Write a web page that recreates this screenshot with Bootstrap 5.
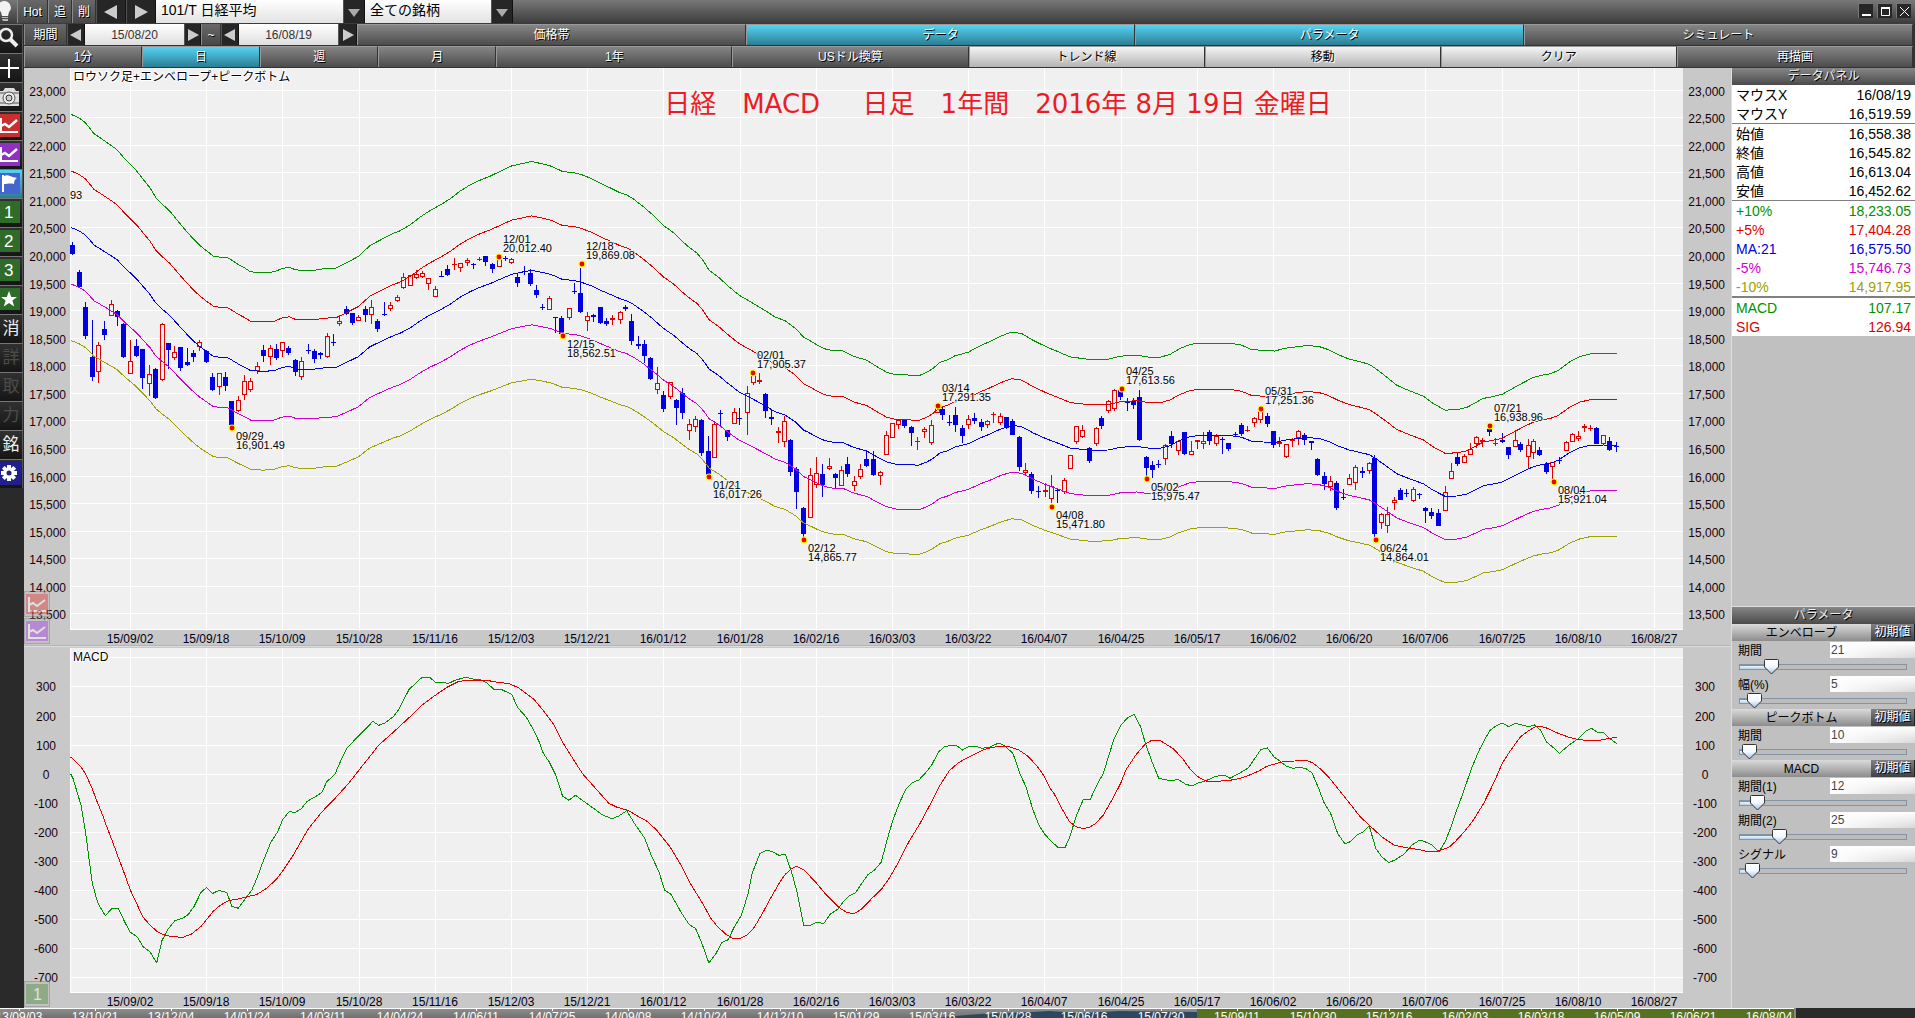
<!DOCTYPE html>
<html lang="ja">
<head>
<meta charset="utf-8">
<meta name="viewport" content="width=device-width, initial-scale=1">
<title>101/T 日経平均</title>
<link rel="stylesheet" href="https://cdn.jsdelivr.net/npm/bootstrap@5.3.0/dist/css/bootstrap.min.css">
<style>
body{font-family:"Liberation Sans","Noto Sans CJK JP",sans-serif;font-size:12px;line-height:16px;background:#2a2a2a;color:#000}
button,input,select{font-family:inherit;border-radius:0}
button{border:0;padding:0}
.title-bar{height:24px;background:linear-gradient(#787878,#3a3a3a)}
.tool-key{height:23px;color:#fff;background:linear-gradient(#686868,#484848);border-left:1px solid #8a8a8a;border-right:1px solid #333;text-shadow:1px 1px 0 #000;font-size:12px}
.arrow-key{background:#262626;border-left:1px solid #555;border-right:1px solid #111}
.combo{appearance:none;border:0;height:23px;font-size:14px;line-height:20px;padding:0 0 3px 5px;background:linear-gradient(#fff,#e2e2e2);color:#000}
.win-key{width:15px;height:15px;background:#262626;border-left:1px solid #777;border-top:1px solid #777;display:flex;align-items:center;justify-content:center}
.bar-row{height:22px;background:#333;padding:0 2px 1px 0}
.period-box{width:99px;height:21px;border:0;text-align:center;color:#333;background:linear-gradient(#fff,#dedede);font-size:12px}
.tab-key{flex:1 1 2px;min-width:0;height:21px;color:#fff;background:linear-gradient(#858585,#4c4c4c);border-left:1px solid #999;border-top:1px solid #9a9a9a;border-right:1px solid #333;text-shadow:1px 1px 0 #000;font-size:12px;line-height:18px}
.tab-key.wide{flex:2 1 4px}
.tab-key.on{background:linear-gradient(#55d4f4,#2b7d92)}
.tab-key.light{background:linear-gradient(#f4f4f4,#b4b4b4);color:#000;text-shadow:1px 1px 0 #fff}
.side{width:24px;background:#2a2a2a}
.side button{width:23px;height:29px;display:block;border-top:1px solid #757575;border-right:1px solid #555;background:linear-gradient(#303030,#151515);color:#eee;font-size:17px;line-height:26px;overflow:hidden}
.side button.on{background:linear-gradient(#55d4f4,#2b7d92)}
.side button.off{color:#4c4c4c}
.side svg{display:block}
.chart-col{background:#c8c8c8;flex:1 1 0;min-width:0}
.price-pane{flex:579 1 0;min-height:0}
.macd-pane{flex:361 1 0;min-height:0}
.chart-col svg.plot{position:absolute;inset:0;width:100%;height:100%;display:block}
.plot text{font-size:12px;fill:#1c0008}
.plot .date{fill:#000018}
.plot .peak{font-size:11px;fill:#000;stroke:#f4f4f4;stroke-width:2px;paint-order:stroke}
.plot .caption{fill:#000;stroke:#fff;stroke-width:2px;paint-order:stroke}
.chart-head{position:absolute;left:37.5%;top:20px;color:#ed1c24;font:400 26px/32px "DejaVu Sans","Noto Sans CJK JP",sans-serif;white-space:pre}
.chart-head span{font-family:"Noto Sans CJK JP",sans-serif;font-weight:300}
.ghost-keys{position:absolute;left:0;bottom:3px;opacity:.45}
.macd-pane .ghost-keys{bottom:1px}
.ghost-keys button{width:26px;height:26px;display:block;background:#bbb;border:1px solid #777;margin-bottom:1px;padding:2px 1px}
.ghost-keys button:last-child{margin-bottom:0}
.right-col{width:184px;background:#c0c0c0;border-left:1px solid #ddd}
.data-pane{flex:539 1 0}
.param-pane{flex:401 1 0;border-top:1px solid #ddd}
.pane-head{height:17px;background:linear-gradient(#868686,#4a4a4a);color:#eee;text-align:center;font-size:12px;line-height:16px;text-shadow:1px 1px 0 #000;margin:0;font-weight:400}
.values{width:100%;border-collapse:separate;border-spacing:0;background:#fff;font-size:14px;line-height:18px}
.values th{font-weight:400;padding:1px 0 0 4px}
.values td{text-align:right;padding:1px 4px 0 0}
.values .line1>*{border-top:1px solid #808080}
.values .line2>*{border-top:2px solid #808080}
.c-green{color:#009000}.c-red{color:#e00000}.c-blue{color:#0000e0}.c-mag{color:#d000d0}.c-olive{color:#a0a000}
.group-head{height:17px;background:linear-gradient(#dadada,#8c8c8c);margin:0;font-size:12px;line-height:18px;text-align:center;font-weight:400}
.reset-key{width:44px;height:17px;flex:none;background:linear-gradient(#808080,#404040);color:#fff;font-size:12px;line-height:17px;text-shadow:1px 1px 0 #000;border-right:1px solid #222}
.param{padding-left:6px}
.param label{height:17px;line-height:20px;font-size:12px;flex:1}
.param input[type=text]{width:85px;height:16px;margin-top:1px;border:0;padding:0 1px;font-size:12px;color:#444;background:linear-gradient(90deg,#fff,#fff0),linear-gradient(#fff,#d8d8d8)}
.param input[type=range]{appearance:none;-webkit-appearance:none;display:block;width:168px;height:17px;margin:0 0 0 1px;background:none}
.param input[type=range]::-webkit-slider-runnable-track{height:6px;border:1px solid #8494a4;background:linear-gradient(90deg,#6a90c8 0,#6a90c8 0) 0 0/var(--fill) 1px no-repeat,linear-gradient(#fff,#b4d4f0) 0 0/var(--fill) 100% no-repeat,#bcbcbc}
.param input[type=range]::-webkit-slider-thumb{-webkit-appearance:none;width:15px;height:16px;margin-top:-6px;border:0;background:url("data:image/svg+xml,%3Csvg xmlns='http://www.w3.org/2000/svg' width='15' height='16'%3E%3ClinearGradient id='g' x2='0' y2='1'%3E%3Cstop stop-color='%23fff'/%3E%3Cstop offset='.5' stop-color='%23f4f8ff'/%3E%3Cstop offset='1' stop-color='%2398c0e8'/%3E%3C/linearGradient%3E%3Cpath d='M1.5.5h12q1 0 1 1v6.500l-7 7-7-7V1.500q0-1 1-1z' fill='url(%23g)' stroke='%23333'/%3E%3C/svg%3E") no-repeat}
.time-strip{height:10px}
.time-strip svg{display:block;width:100%;height:10px}
.time-strip text{font-size:12px;fill:#fff}
</style>
<script src="https://cdn.jsdelivr.net/npm/bootstrap@5.3.0/dist/js/bootstrap.bundle.min.js"></script>
</head>
<body class="d-flex flex-column vh-100 overflow-hidden">

<header class="title-bar d-flex align-items-start flex-shrink-0">
  <svg width="17" height="22" class="flex-shrink-0" aria-hidden="true"><path d="M-1 3Q5-1 9 3q4 5 0 9l-1 4H2l-1-4-3-3z" fill="#f2f2f2"/><path d="M2 17h6v1H2zM2 19h6v2H3z" fill="#bbb"/></svg>
  <button class="tool-key" style="width:31px">Hot</button>
  <button class="tool-key" style="width:24px">追</button>
  <button class="tool-key" style="width:24px">削</button>
  <button class="tool-key arrow-key" style="width:30px" aria-label="前"><svg width="16" height="16"><path d="M14 1v14L1 8z" fill="#ccc"/></svg></button>
  <button class="tool-key arrow-key" style="width:30px" aria-label="次"><svg width="16" height="16"><path d="M2 1v14l13-7z" fill="#ccc"/></svg></button>
  <select class="combo" style="width:187px" aria-label="銘柄"><option>101/T 日経平均</option></select>
  <span class="tool-key arrow-key text-center pt-1" style="width:22px"><svg width="12" height="9"><path d="M0 1h12L6 9z" fill="#aaa"/></svg></span>
  <select class="combo" style="width:126px" aria-label="銘柄リスト"><option>全ての銘柄</option></select>
  <span class="tool-key arrow-key text-center pt-1" style="width:22px"><svg width="12" height="9"><path d="M0 1h12L6 9z" fill="#aaa"/></svg></span>
  <div class="ms-auto d-flex gap-1 pe-1" style="padding-top:3px">
    <button class="win-key" aria-label="最小化"><svg width="11" height="11"><path d="M1 8h9v2H1z" fill="#fff"/></svg></button>
    <button class="win-key" aria-label="最大化"><svg width="11" height="11"><path d="M1.500 1.500h8v8h-8z" fill="none" stroke="#fff"/><path d="M1 1h9v2H1z" fill="#fff"/></svg></button>
    <button class="win-key" aria-label="閉じる"><svg width="11" height="11"><path d="M1 1l9 9M10 1l-9 9" stroke="#fff" stroke-width="1"/></svg></button>
  </div>
</header>

<div class="d-flex flex-fill" style="min-height:0">
  <nav class="side flex-shrink-0" aria-label="ツール">
    <button aria-label="拡大"><svg width="23" height="28"><circle cx="6" cy="10" r="6" fill="none" stroke="#eee" stroke-width="2.500"/><path d="M10 14l7 7" stroke="#eee" stroke-width="4"/></svg></button>
    <button aria-label="十字"><svg width="23" height="28"><path d="M0 14h19M9 5v19" stroke="#fff" stroke-width="2"/></svg></button>
    <button aria-label="撮影"><svg width="23" height="28"><path d="M-1 8h4l2-3h9l2 3h3v15H-1z" fill="#ddd"/><path d="M0 10h19M0 20h19" stroke="#555"/><circle cx="9" cy="15" r="6" fill="#eee" stroke="#555"/><circle cx="9" cy="15" r="3" fill="#ccc" stroke="#333"/></svg></button>
    <button aria-label="赤チャート"><svg width="23" height="28"><path d="M0 2h20v23H0z" fill="#c83030"/><path d="M1 6v14h17" stroke="#fff" stroke-width="2" fill="none"/><path d="M1 14l4-2 4 3 8-7" stroke="#fff" stroke-width="2.500" fill="none"/></svg></button>
    <button aria-label="紫チャート"><svg width="23" height="28"><path d="M0 2h20v23H0z" fill="#8e30c0"/><path d="M1 6v14h17" stroke="#fff" stroke-width="2" fill="none"/><path d="M1 14l4-2 4 3 8-7" stroke="#fff" stroke-width="2.500" fill="none"/></svg></button>
    <button class="on" aria-label="旗"><svg width="23" height="28"><path d="M0 3h20v21H0z" fill="#4664d0"/><path d="M3 5v17" stroke="#fff" stroke-width="2"/><path d="M4 6c4-2 6 1 13 2-2 1-3 3-3 6-5-1-6 0-10 0z" fill="#fff"/></svg></button>
    <button><svg width="23" height="28"><path d="M0 2h20v22H0z" fill="#2f6c2a"/><text x="4" y="19" font-size="17" fill="#fff">1</text></svg></button>
    <button><svg width="23" height="28"><path d="M0 2h20v22H0z" fill="#2f6c2a"/><text x="4" y="19" font-size="17" fill="#fff">2</text></svg></button>
    <button><svg width="23" height="28"><path d="M0 2h20v22H0z" fill="#2f6c2a"/><text x="4" y="19" font-size="17" fill="#fff">3</text></svg></button>
    <button aria-label="お気に入り"><svg width="23" height="28"><path d="M0 2h20v22H0z" fill="#2f6c2a"/><path d="M9 5l2.200 6H17l-4.600 3.600 1.800 6L9 17l-5.200 3.600 1.800-6L1 11h5.800z" fill="#fff"/></svg></button>
    <button>消</button>
    <button class="off">詳</button>
    <button class="off">取</button>
    <button class="off">力</button>
    <button>銘</button>
    <button aria-label="設定"><svg width="23" height="28"><path d="M0 1h21v24H0z" fill="#20208c"/><g stroke="#fff" stroke-width="4"><path d="M9 5v16M1 13h16M3.300 7.300l11.400 11.400M14.700 7.300L3.300 18.700"/></g><circle cx="9" cy="13" r="5.500" fill="#fff"/><circle cx="9" cy="13" r="2.500" fill="#20208c"/></svg></button>
  </nav>

  <div class="d-flex flex-column flex-fill" style="min-width:0">
    <div class="bar-row d-flex">
      <label class="tool-key text-center" for="from" style="width:43px;height:21px;line-height:22px">期間</label>
      <button class="tool-key arrow-key h-100" style="width:18px" aria-label="開始を前へ"><svg width="12" height="12"><path d="M11 0v12L0 6z" fill="#ccc"/></svg></button>
      <input class="period-box" id="from" value="15/08/20">
      <button class="tool-key arrow-key h-100" style="width:17px" aria-label="開始を次へ"><svg width="12" height="12"><path d="M1 0v12l11-6z" fill="#ccc"/></svg></button>
      <span class="tool-key text-center h-100" style="width:20px;line-height:22px">~</span>
      <button class="tool-key arrow-key h-100" style="width:18px" aria-label="終了を前へ"><svg width="12" height="12"><path d="M11 0v12L0 6z" fill="#ccc"/></svg></button>
      <input class="period-box" value="16/08/19" aria-label="終了日">
      <button class="tool-key arrow-key h-100" style="width:19px" aria-label="終了を次へ"><svg width="12" height="12"><path d="M1 0v12l11-6z" fill="#ccc"/></svg></button>
      <button class="tab-key">価格帯</button>
      <button class="tab-key on">データ</button>
      <button class="tab-key on">パラメータ</button>
      <button class="tab-key">シミュレート</button>
    </div>
    <div class="bar-row d-flex">
      <button class="tab-key">1分</button>
      <button class="tab-key on">日</button>
      <button class="tab-key">週</button>
      <button class="tab-key">月</button>
      <button class="tab-key wide">1年</button>
      <button class="tab-key wide">USドル換算</button>
      <button class="tab-key wide light">トレンド線</button>
      <button class="tab-key wide light">移動</button>
      <button class="tab-key wide light">クリア</button>
      <button class="tab-key wide">再描画</button>
    </div>

    <div class="d-flex flex-fill" style="min-height:0">
      <main class="chart-col d-flex flex-column">
        <section class="price-pane position-relative">
          <svg class="plot" id="price"></svg>
          <div class="chart-head">日経　MACD　  日足　1年間　2016年 8月 19日 金曜日</div>
          <div class="ghost-keys">
            <button aria-label="赤チャート"><svg width="22" height="20"><path d="M0 0h22v20H0z" fill="#e03838"/><path d="M3 3v14h17M3 11l4-2 4 3 8-6" stroke="#fff" stroke-width="2" fill="none"/></svg></button>
            <button aria-label="紫チャート"><svg width="22" height="20"><path d="M0 0h22v20H0z" fill="#a040e0"/><path d="M3 3v14h17M3 11l4-2 4 3 8-6" stroke="#fff" stroke-width="2" fill="none"/></svg></button>
          </div>
        </section>
        <section class="macd-pane position-relative">
          <svg class="plot" id="macd"></svg>
          <div class="ghost-keys"><button><svg width="22" height="20"><path d="M0 0h22v20H0z" fill="#48883c"/><text x="7" y="16" font-size="16" fill="#fff">1</text></svg></button></div>
        </section>
      </main>

      <aside class="right-col d-flex flex-column flex-shrink-0">
        <section class="data-pane">
          <h2 class="pane-head">データパネル</h2>
          <table class="values">
            <tbody>
              <tr><th>マウスX</th><td>16/08/19</td></tr>
              <tr><th>マウスY</th><td>16,519.59</td></tr>
              <tr class="line1"><th>始値</th><td>16,558.38</td></tr>
              <tr><th>終値</th><td>16,545.82</td></tr>
              <tr><th>高値</th><td>16,613.04</td></tr>
              <tr><th>安値</th><td>16,452.62</td></tr>
              <tr class="line1"><th class="c-green">+10%</th><td class="c-green">18,233.05</td></tr>
              <tr class="c-red"><th>+5%</th><td>17,404.28</td></tr>
              <tr class="c-blue"><th>MA:21</th><td>16,575.50</td></tr>
              <tr class="c-mag"><th>-5%</th><td>15,746.73</td></tr>
              <tr class="c-olive"><th>-10%</th><td>14,917.95</td></tr>
              <tr class="line2"><th class="c-green">MACD</th><td class="c-green">107.17</td></tr>
              <tr class="c-red"><th>SIG</th><td>126.94</td></tr>
            </tbody>
          </table>
        </section>
        <section class="param-pane">
          <h2 class="pane-head">パラメータ</h2>
          <div class="d-flex"><h3 class="group-head flex-fill">エンベローブ</h3><button class="reset-key">初期値</button></div>
          <div class="param"><div class="d-flex"><label for="p1">期間</label><input type="text" id="p1" value="21"></div><input type="range" min="2" max="124" value="21" aria-label="エンベローブ 期間"></div>
          <div class="param"><div class="d-flex"><label for="p2">幅(%)</label><input type="text" id="p2" value="5"></div><input type="range" min="0.5" max="100" step="0.5" value="5" aria-label="エンベローブ 幅"></div>
          <div class="d-flex"><h3 class="group-head flex-fill">ピークボトム</h3><button class="reset-key">初期値</button></div>
          <div class="param"><div class="d-flex"><label for="p3">期間</label><input type="text" id="p3" value="10"></div><input type="range" min="8" max="170" value="10" aria-label="ピークボトム 期間"></div>
          <div class="d-flex"><h3 class="group-head flex-fill">MACD</h3><button class="reset-key">初期値</button></div>
          <div class="param"><div class="d-flex"><label for="p4">期間(1)</label><input type="text" id="p4" value="12"></div><input type="range" min="2" max="158" value="12" aria-label="MACD 期間1"></div>
          <div class="param"><div class="d-flex"><label for="p5">期間(2)</label><input type="text" id="p5" value="25"></div><input type="range" min="2" max="109" value="25" aria-label="MACD 期間2"></div>
          <div class="param"><div class="d-flex"><label for="p6">シグナル</label><input type="text" id="p6" value="9"></div><input type="range" min="4" max="160" value="9" aria-label="MACD シグナル"></div>
        </section>
      </aside>
    </div>
  </div>
</div>

<footer class="time-strip flex-shrink-0"><svg id="strip"></svg></footer>

<script>
/* Series are kept in blocks: x origin, y origin, x scale, y scale, then the points. */
const MA = [
[0,60,3,3,"212,502 222,506 238,513 256,525 270,541 283,556 300,566 314,575 333,587 350,598 371,620 391,639 410,657 430,680 450,703 467,729 490,750 510,767 535,795 560,822 583,845 600,860 619,874 640,889 660,892 680,892 695,900 715,912 735,922 752,932 790,934 822,932 845,923 868,919 885,926 905,928 940,928 975,923 1008,922 1040,907 1075,890 1110,860 1150,841 1180,827"],
[400,200,3,3,"0,400 30,384 60,363 90,345 120,330 150,313 180,292 210,275 240,262 270,251 300,238 335,223 365,217 395,211 425,217 455,224 487,238 525,242 545,247 575,258 600,270 635,285 660,296 680,302 700,313 730,334 760,358 790,385 820,405 850,431 870,447 890,460 910,482 928,508 955,526 985,551 1018,576 1060,598 1100,620 1125,635 1155,645 1185,665"],
[800,340,3,3,"12,271 25,277 49,290 75,302 100,307 128,307 160,322 200,333 230,350 260,366 290,373 320,373 355,376 380,366 395,358 420,339 440,333 465,321 505,311 540,294 570,282 600,268 635,256 665,260 700,279 740,297 770,308 810,324 870,331 925,330 960,322 1010,319 1050,325 1080,325 1110,317 1140,301 1170,290 1200,286"],
[1200,330,3,3,"10,316 40,316 70,316 100,318 125,322 155,334 190,336 225,338 250,331 275,328 320,323 355,325 385,334 415,348 448,360 475,366 508,374 530,388 560,409 590,431 625,445 670,461 700,481 735,499 770,498 800,492 830,477 850,467 875,463 907,456 940,439 970,424 1000,410 1030,403 1050,400 1075,391 1110,367 1140,353 1170,346 1210,345 1250,346"]];
const V = 2.9145, W1 = 2.24, W2 = 2.306;
const MACD = [
[0,480,3,V,"212,857 220,872 232,912 243,947 257,1030 268,1110 277,1175 293,1232 316,1270 336,1248 355,1248 375,1290 391,1318 412,1332 430,1361 450,1375 470,1407 486,1342 505,1308 525,1284 548,1277 565,1266 582,1243 603,1202 619,1188 638,1205 657,1196 680,1202 696,1243 715,1248 735,1222 755,1196 772,1158 790,1110 812,1057 833,1025 848,990 868,966 885,969 903,959 922,936 945,924 965,911 980,880 1005,857 1025,812 1042,780 1075,747 1105,718 1118,703 1136,715 1155,708 1180,690 1195,671"],
[400,640,W1,3,"0,200 10,175 20,149 40,123 50,112 66,112 80,127 98,127 107,131 125,120 148,112 165,118 180,119 195,129 210,148 228,149 250,163 264,204 282,230 296,262 312,306 321,340 334,365 349,405 364,468 378,481 393,466 420,492 455,526 475,536 490,528 508,512 526,552 548,594 564,650 580,695 593,751 607,763 630,818 648,854 662,865 675,905 692,969 708,940 721,908 735,899 748,863 765,825 780,760 789,700 806,641 822,630 834,635 849,646 863,643 877,695 889,755 904,856 920,856 934,846 949,851 964,822 981,807 992,787 1007,767 1020,758 1048,704 1063,690 1078,666 1090,605 1104,540 1120,485 1133,448 1147,428 1162,420 1175,402 1191,375 1206,337 1218,321 1235,316 1246,316 1260,330 1272,321 1288,318 1303,325 1320,322 1341,309 1355,318 1373,340 1390,405 1402,440 1418,510 1432,558 1444,582"],
[1050,640,W2,3,"0,600 18,622 35,622 46,590 60,530 77,478 93,478 106,440 123,400 136,345 148,295 163,256 180,232 194,223 209,260 220,310 235,365 251,415 265,419 282,422 295,418 312,432 327,438 340,430 360,422 382,409 402,405 415,415 435,401 457,384 473,354 486,329 501,324 516,350 530,363 545,379 560,385 575,382 590,386 604,398 618,440 632,488 647,520 664,582 680,611 691,606 708,585 722,576 736,557 751,625 765,650 781,668 795,660 815,644 835,615 853,600 868,607 880,614 897,635 912,603 925,560 938,510 955,450 972,385 990,330 1005,292 1015,271 1026,260 1043,249 1058,260 1074,250 1090,256 1105,260 1117,255 1131,270 1145,306 1160,322 1175,340 1195,317 1217,297 1235,274 1249,265 1262,277 1277,278 1290,295 1307,311"]];
const SIG = [
[0,480,3,V,"212,808 225,818 243,837 257,857 277,900 290,935 305,970 320,1010 340,1060 355,1100 370,1138 391,1195 410,1235 428,1273 450,1297 470,1315 485,1323 510,1330 548,1333 575,1323 603,1301 619,1282 640,1257 660,1240 685,1226 710,1222 740,1215 770,1208 800,1190 830,1163 850,1137 880,1093 905,1050 925,1017 965,968 1005,928 1045,885 1075,848 1115,799 1136,773 1180,735"],
[400,640,W1,3,"0,258 25,227 50,195 80,165 105,142 130,125 150,121 195,121 210,125 245,131 265,143 300,178 320,210 345,255 365,308 390,362 410,403 440,448 468,490 485,501 510,511 535,530 555,545 575,571 605,621 630,677 650,730 680,795 695,833 710,858 730,883 745,895 762,895 777,885 793,863 810,825 830,775 850,728 863,703 877,686 889,679 905,690 930,725 955,765 985,804 1000,817 1017,821 1033,808 1055,778 1080,745 1095,717 1115,670 1140,605 1165,550 1190,487 1210,435 1230,393 1250,369 1275,350 1310,328 1335,320 1362,319 1385,329 1405,347 1425,375 1443,408"],
[1050,640,W2,3,"0,445 10,462 25,500 45,545 60,560 77,566 92,561 105,551 123,525 145,475 163,430 175,390 198,345 220,311 232,303 253,301 268,313 285,327 305,355 325,390 342,411 362,424 385,424 415,421 435,416 455,408 480,394 500,379 516,373 540,364 565,363 590,361 605,368 625,388 645,415 665,448 690,488 715,530 740,560 765,590 793,615 820,623 853,629 870,635 895,633 920,622 935,604 955,576 975,543 1000,490 1025,424 1043,370 1060,335 1085,290 1105,271 1120,260 1135,260 1150,266 1170,279 1195,291 1215,298 1235,301 1268,301 1285,296 1307,292"]];
/* Candles: colour and x, high, body top, body bottom, low. */
const CANDLES = [
[0,60,"b218 547 555 582 585,b238 630 636 682 684,b257 726 741 828 836,b277 780 891 950 963,r296 846 856 937 969,b314 783 807 825 839,r334 720 733 769 769,b352 750 753 770 798,b371 788 792 891 894,r392 840 904 943 943,b409 837 858 888 891,b427 867 867 953 987,r449 915 943 973 1008,b466 924 927 1013 1017,r486 790 793 961 963,b505 849 849 869 927,r524 858 877 895 899,b541 861 861 923 932,b562 864 906 915 919,b580 870 879 891 906,r599 840 847 860 872,b619 870 873 905 908,b638 939 951 990 993,r657 940 940 982 1004,b676 936 951 978 992,b694 1023 1023 1095 1100,r715 1008 1021 1053 1056,r734 945 964 1006 1021,r752 955 964 991 995,r773 906 919 933 941,b790 855 870 888 905,r810 855 865 892 914,b829 853 867 893 899,r848 847 847 874 890,b866 859 864 879 885,b886 897 900 935 947,r905 892 904 952 960,b924 852 870 873 881,b943 868 873 896 908,b961 876 879 884 896,r981 820 829 892 893,b1001 822 846 849 858,r1019 766 784 793 797,b1038 739 747 761 766,b1057 760 760 789 795,r1076 765 770 784 784,b1096 739 747 765 786,r1115 720 742 766 792,b1132 778 783 806 815,b1153 726 762 765 768,r1172 727 736 748 754,r1191 706 710 722 727,r1211 640 650 685 688,r1230 644 644 679 679,r1249 630 641 655 658"],
[400,200,"r68 214 220 230 235,r86 235 235 253 269,r105 259 267 292 292,b125 213 228 231 231,b142 195 207 224 227,r163 174 192 195 209,r181 188 190 203 215,r201 175 181 190 197,b220 190 192 195 207,r239 170 178 181 182,b257 168 168 185 197,b277 189 192 208 218,r297 170 172 202 202,b316 168 174 176 182,r335 175 178 188 191,b352 222 231 248 261,b373 199 213 216 224,b391 208 219 251 257,b409 255 270 285 293,b428 312 320 324 330,r449 287 295 331 331,b467 350 351 354 399,b484 348 354 402 405,r507 325 325 355 359,b523 249 273 276 282,b541 204 279 335 338,r563 337 349 362 392,b580 342 346 351 365,b600 321 321 368 371,b619 354 363 372 377,r638 346 355 361 374,r660 334 337 361 371,b676 315 321 326 332,b694 343 363 422 434,b714 408 432 437 446,b733 421 432 467 488,b752 470 474 536 540,r773 501 549 571 581,b790 573 585 626 635,r810 545 547 592 596,b829 597 600 623 674,b848 564 579 638 656,r867 657 672 694 719,r887 648 658 682 696,b904 657 660 758 767,b925 708 753 824 826,r944 664 673 775 775,b962 630 639 643 677,b981 690 690 710 722,r1002 625 637 673 673,b1018 624 654 657 674,r1041 558 580 640 704,r1059 520 522 550 554,r1077 519 541 547 552,b1096 579 582 632 653,b1115 627 651 656 674,r1134 681 693 700 728,r1154 648 664 727 740,b1171 717 720 815 827,b1189 802 807 875 926,b1210 921 924 1001 1010,r1230 804 826 955 955,r1248 771 820 856 863"],
[800,340,"b67 372 402 436 471,r87 354 379 388 391,b105 399 402 414 445,r125 378 391 437 439,b142 350 372 402 410,r163 408 424 437 453,r182 372 388 412 418,b200 330 357 378 380,b220 333 357 404 407,r240 393 397 409 434,r258 273 286 346 346,r278 250 250 295 295,r296 240 241 256 268,b314 237 240 258 264,b334 258 261 279 318,r353 291 304 307 329,r373 262 268 277 293,r393 240 256 310 314,r412 200 203 220 220,b428 200 206 224 240,b449 224 246 248 257,b466 201 225 254 275,b487 254 264 288 308,r506 226 238 256 268,b523 219 234 242 252,b544 238 246 261 272,r563 240 244 254 263,r581 217 223 226 250,r602 219 229 248 254,b619 231 231 263 266,b638 237 243 284 284,b658 288 291 380 392,r677 369 391 398 404,b694 397 402 452 462,b715 439 453 456 473,r736 430 451 455 470,r753 405 439 478 489,b773 444 450 452 488,r792 415 421 457 461,r810 344 346 388 388,r830 259 259 307 311,r848 256 271 292 293,b868 321 324 362 368,r888 262 265 313 317,b904 228 234 258 266,r925 180 184 214 220,r944 148 151 208 212,b961 141 150 171 180,b982 174 186 188 212,b1001 174 182 194 206,b1018 150 171 299 302,b1039 348 351 383 408,b1057 363 375 389 414,b1076 360 372 375 384,r1097 313 316 358 374,b1114 274 288 311 323,r1134 300 304 334 346,b1153 276 276 342 345,r1173 304 334 346 346,r1191 300 301 307 327"],
[1200,330,"r11 306 334 341 356,b29 301 306 332 344,r49 312 319 343 348,b67 322 327 329 371,b85 339 339 356 362,b106 306 313 316 320,b124 279 285 311 317,r143 288 301 304 306,r164 262 265 280 290,r182 235 240 271 278,b202 249 258 281 290,b220 303 303 344 353,r239 322 335 341 350,r258 343 343 380 385,r278 325 328 334 352,r296 300 304 324 344,b314 309 315 329 345,b334 333 333 338 360,b352 384 387 434 437,b373 426 438 461 479,r392 438 454 472 482,b409 454 459 533 540,b430 477 501 503 510,r449 432 445 466 466,r467 405 412 460 479,b487 412 423 428 443,r507 396 400 424 431,b523 375 384 611 620,r545 549 553 580 596,r563 532 553 589 608,r582 501 511 520 540,b601 475 480 509 509,b619 477 489 491 500,r639 472 478 514 516,b658 489 493 495 508,b677 532 534 542 578,b694 534 546 557 566,b715 538 549 587 587,r735 469 487 544 544,r754 400 424 448 448,b772 367 381 402 408,r792 372 377 400 400,r812 340 358 376 376,r830 319 322 343 355,r848 324 329 335 350,b869 292 297 306 318,r887 325 338 340 348,b907 309 330 336 338,b925 351 351 374 386,r945 306 331 352 352,b961 337 342 359 365,r984 327 346 382 413,r1001 328 334 370 388,b1018 350 360 374 378,b1039 396 402 426 432,r1058 395 397 412 446,b1077 382 391 394 402,r1098 333 335 364 364,r1116 309 313 337 337,r1135 304 319 326 332,r1153 283 289 295 305,r1172 286 294 297 302,b1190 292 294 341 341,r1211 315 316 343 343,b1229 322 333 360 362,b1249 336 347 349 365"]];
const PEAKS = [[232,428,"09/29","16,901.49",0],[499,257,"12/01","20,012.40",1],[582,264,"12/18","19,869.08",1],[563,336,"12/15","18,562.51",0],[753,373,"02/01","17,905.37",1],[709,477,"01/21","16,017.26",0],[804,540,"02/12","14,865.77",0],[938,406,"03/14","17,291.35",1],[1122,389,"04/25","17,613.56",1],[1052,507,"04/08","15,471.80",0],[1147,479,"05/02","15,975.47",0],[1261,409,"05/31","17,251.36",1],[1490,426,"07/21","16,938.96",1],[1376,540,"06/24","14,864.01",0],[1554,482,"08/04","15,921.04",0]];
const DATES = "15/09/02 15/09/18 15/10/09 15/10/28 15/11/16 15/12/03 15/12/21 16/01/12 16/01/28 16/02/16 16/03/03 16/03/22 16/04/07 16/04/25 16/05/17 16/06/02 16/06/20 16/07/06 16/07/25 16/08/10 16/08/27".split(" ");
const STRIP = "13/09/03 13/10/21 13/12/04 14/01/24 14/03/11 14/04/24 14/06/11 14/07/25 14/09/08 14/10/24 14/12/10 15/01/29 15/03/16 15/04/28 15/06/16 15/07/30 15/09/11 15/10/30 15/12/16 16/02/03 16/03/18 16/05/09 16/06/21 16/08/04".split(" ");

const expand = s => s.flatMap(([ox,oy,sx,sy,t]) => t.split(" ").map(p => { const [x,y]=p.split(",").map(Number); return [ox+x/sx, oy+y/sy]; }));
const line = (pts,c) => `<polyline points="${pts.map(p=>p[0].toFixed(1)+","+p[1].toFixed(1)).join(" ")}" fill="none" stroke="${c}" shape-rendering="crispEdges"/>`;
const rect = (x,y,w,h,c) => `<rect x="${x}" y="${y}" width="${w}" height="${h}" fill="${c}"/>`;
const R = Math.round;

function frame(el, top, bottom, foot) {
  const w = el.clientWidth, h = el.clientHeight, pw = w-94, ph = h-foot[0];
  const X = x => 46+(x-70)/1613*pw, Y = y => foot[1]+(y-top)/(bottom-top)*(ph-foot[1]);
  let s = rect(46,foot[1],pw,ph-foot[1],"#f0f0f0");
  DATES.forEach((d,i) => { const x=R(X(130+76.2*i)); s += rect(x,foot[1],1,ph-foot[1]+2,"#fff")+`<text class="date" text-anchor="middle" x="${x}" y="${ph+14}">${d}</text>`; });
  s += rect(46,ph,pw,1,"#fff")+rect(46,foot[1],1,ph-foot[1],"#fff");
  return {w,h,pw,X,Y,s};
}
function drawPrice() {
  const el = document.getElementById("price"), f = frame(el,68,629,[18,0]), {X,Y} = f;
  let s = f.s;
  const py = p => 90.6+(23000-p)*.05514;
  for (let p=23000;p>=13500;p-=500) {
    const y=R(Y(py(p)))-1, t=p.toLocaleString("en-US");
    s += rect(46,y,f.pw,1,"#fff")+`<text text-anchor="end" x="42" y="${y+6}">${t}</text><text text-anchor="end" x="${f.w-6}" y="${y+6}">${t}</text>`;
  }
  s += '<g shape-rendering="crispEdges">';
  for (const [ox,oy,t] of CANDLES) for (const c of t.split(",")) {
    const blue=c[0]=="b", v=c.slice(1).split(" ").map(Number), x=Math.floor(X(ox+v[0]/3));
    const [hi,top,bot,lo]=v.slice(1).map(a=>R(Y(oy+a/3)));
    const k=blue?"#0000e0":"#e00000", b=Math.max(bot,top+1);
    if (blue || b-top<2) s += rect(x,hi,1,Math.max(lo-hi,1),k)+rect(x-2,top,5,b-top,k);
    else s += rect(x,hi,1,Math.max(top-hi,0),k)+rect(x,b,1,Math.max(lo-b,0),k)+`<rect x="${x-1.5}" y="${top+.5}" width="4" height="${b-top-1||1}" fill="none" stroke="${k}"/>`;
  }
  s += "</g>";
  const ma = expand(MA);
  [[1.1,"#009000"],[1.05,"#e00000"],[1,"#0000e0"],[.95,"#d000d0"],[.9,"#a0a000"]].forEach(([m,c]) =>
    s += line(ma.map(([x,y]) => [X(x), Y(py((23000-(y-90.6)/.05514)*m))]), c));
  for (const [x,y,d,v,up] of PEAKS) {
    const cx=X(x), cy=Y(y), b=cy+(up?-14:12);
    s += `<circle cx="${cx}" cy="${cy}" r="3" fill="#f00000" stroke="#ff0" stroke-width="1.200"/><text class="peak" x="${cx+4}" y="${b}">${d}</text><text class="peak" x="${cx+4}" y="${b+9}">${v}</text>`;
  }
  s += `<text class="peak" x="46" y="131">93</text><text class="caption" x="49" y="13">ロウソク足+エンベロープ+ピークボトム</text>`;
  s += rect(0,f.h-2,f.w,1,"#b4b4b4")+rect(0,f.h-1,f.w,1,"#ddd");
  el.innerHTML = s;
}
function drawMacd() {
  const el = document.getElementById("macd"), f = frame(el,648,992,[16,1]), {X,Y} = f;
  let s = f.s;
  for (let v=400;v>=-700;v-=100) {
    const y=R(Y(773.7-v*.291));
    s += rect(46,y,f.pw,1,"#fff");
    if (v<400) s += `<text text-anchor="middle" x="22" y="${y+5}">${v}</text><text text-anchor="middle" x="${f.w-26}" y="${y+5}">${v}</text>`;
  }
  const map = a => expand(a).map(([x,y]) => [X(x),Y(y)]);
  s += line(map(MACD),"#009000")+line(map(SIG),"#e00000")+`<text class="caption" x="49" y="14">MACD</text>`;
  el.innerHTML = s;
}
function drawStrip() {
  const el = document.getElementById("strip"), k = el.clientWidth/1915;
  let s = '<defs><linearGradient id="sg" x2="0" y2="1"><stop stop-color="#909090"/><stop offset="1" stop-color="#707070"/></linearGradient></defs>';
  s += rect(0,0,1197*k,10,"url(#sg)")+`<path d="M${930*k} 10l${50*k}-4 ${30*k}-1 ${40*k}-2 ${30*k} 2 ${40*k}-2 ${77*k} 1v6z" fill="#2c4860"/>`+rect(1197*k,0,597*k,10,"#55721f")+rect(1794*k,0,2,10,"#888")+rect(0,0,1794*k,1,"#fff");
  STRIP.forEach((d,i) => { const x=R((19+76.1*i)*k); s += rect(x,0,1,3,"#fff")+`<text text-anchor="middle" x="${x}" y="13">${d}</text>`; });
  el.innerHTML = s;
}
function draw() { drawPrice(); drawMacd(); drawStrip(); }
document.querySelectorAll("input[type=range]").forEach(r => {
  const fill = () => r.style.setProperty("--fill", (r.value-r.min)/(r.max-r.min)*100+"%");
  r.addEventListener("input", fill); fill();
});
addEventListener("resize", draw);
draw();
</script>
</body>
</html>
